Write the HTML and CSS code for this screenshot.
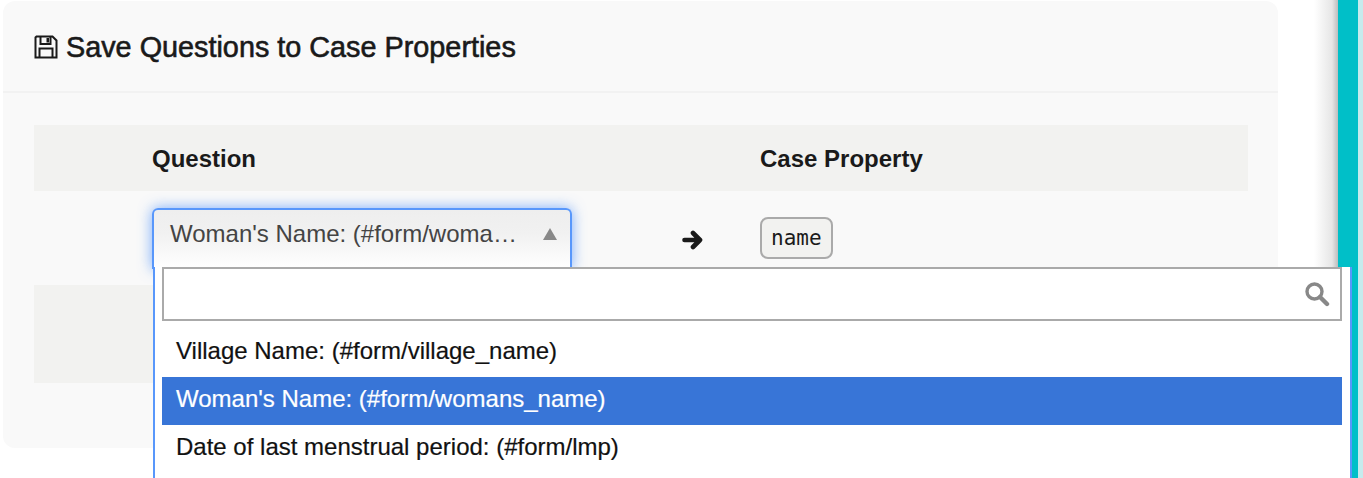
FILE: index.html
```html
<!DOCTYPE html>
<html lang="en">
<head>
  <meta charset="UTF-8">
  <title>Save Questions to Case Properties</title>
  <link rel="stylesheet" href="styles.css">
</head>
<body>

  <div class="page">
    <main class="content">
      <section class="panel">
        <header class="panel-head">
          <h2 class="panel-title">
            <svg class="save-icon" viewBox="0 0 24 24" width="24" height="24">
              <path d="M2.5 1.5H18.5L22.5 5.5V22.5H1.5V2.5Z M6.5 2V9H16.5V2 M5.5 22V13.5H18.5V22" fill="none" stroke="#1a1a1a" stroke-width="2"/>
              <rect x="12.5" y="3" width="2.5" height="4.5" fill="#1a1a1a"/>
            </svg>
            Save Questions to Case Properties
          </h2>
        </header>
        <div class="panel-body">
          <div class="row row-head">
            <div class="col-question">Question</div>
            <div class="col-arrow"></div>
            <div class="col-property">Case Property</div>
          </div>
          <div class="row row-item">
            <div class="col-question">
              <div class="select-box">
                <span class="select-text">Woman's Name: (#form/woma…</span>
                <span class="select-caret"></span>
              </div>
            </div>
            <div class="col-arrow">
              <svg viewBox="0 0 22 20" width="22" height="20">
                <path d="M2.5 10H18 M11 3L18 10L11 17" fill="none" stroke="#1a1a1a" stroke-width="4.6" stroke-linecap="round" stroke-linejoin="round"/>
              </svg>
            </div>
            <div class="col-property"><code class="prop-tag">name</code></div>
          </div>
          <div class="row row-empty"></div>
        </div>
      </section>
    </main>
    <aside class="sidebar"></aside>
  </div>

  <div class="dropdown">
    <div class="search-box">
      <svg viewBox="0 0 26 26" width="26" height="26">
        <circle cx="10.5" cy="10.5" r="7.5" fill="none" stroke="#888" stroke-width="3.4"/>
        <path d="M16 16L23 23" fill="none" stroke="#888" stroke-width="4.4" stroke-linecap="round"/>
      </svg>
    </div>
    <ul class="option-list">
      <li class="option">Village Name: (#form/village_name)</li>
      <li class="option option-active">Woman's Name: (#form/womans_name)</li>
      <li class="option">Date of last menstrual period: (#form/lmp)</li>
    </ul>
  </div>

</body>
</html>
```

FILE: styles.css
```css
* { box-sizing: border-box; }

html, body {
  margin: 0;
  padding: 0;
  height: 100%;
  overflow: hidden;
}

body {
  font-family: 'Liberation Sans', Arial, sans-serif;
  color: #1a1a1a;
  background: #fff;
}

.page {
  display: flex;
  height: 478px;
}

.content {
  width: 1338px;
  padding: 1px 0 0 3px;
  background: linear-gradient(to left, #bdbdbd 0, #e6e6e6 6px, #fff 24px);
}

.panel {
  width: 1275px;
  height: 447px;
  background: #f9f9f9;
  border-radius: 12px;
}

.panel-head {
  height: 92px;
  padding: 2px 31px 0;
  display: flex;
  align-items: center;
  border-bottom: 2px solid #f2f2f2;
}

.panel-title {
  margin: 0;
  display: flex;
  align-items: center;
  gap: 8px;
  font-size: 28.8px;
  font-weight: normal;
  -webkit-text-stroke: 0.6px #1a1a1a;
}

.save-icon {
  flex: none;
}

.panel-body {
  padding: 32px 30px 0 31px;
}

.row {
  display: flex;
}

.row-head {
  height: 66px;
  padding-top: 2px;
  align-items: center;
  background: #f2f2f0;
  font-size: 24px;
  font-weight: bold;
}

.row-item {
  height: 94px;
  padding-top: 17px;
  align-items: flex-start;
}

.row-empty {
  height: 98px;
  background: #f2f2f0;
}

.col-question {
  width: 530px;
  margin-left: 118px;
  flex: none;
}

.col-arrow {
  width: 78px;
  flex: none;
  padding-top: 22px;
}

.col-property {
  flex: 1;
}

.select-box {
  width: 420px;
  height: 61px;
  padding: 0 13px 11px 16px;
  display: flex;
  align-items: center;
  color: #444;
  font-size: 24px;
  background: linear-gradient(to bottom, #eee 0, #f1f1f1 40%, #fff 100%);
  border: 2px solid #5897fb;
  border-bottom: none;
  border-radius: 6px 6px 0 0;
  box-shadow: 0 0 14px rgba(88, 151, 251, 0.8);
}

.select-text {
  flex: 1;
  white-space: nowrap;
}

.select-caret {
  flex: none;
  width: 0;
  height: 0;
  border-left: 7px solid transparent;
  border-right: 7px solid transparent;
  border-bottom: 12px solid #888;
}

.prop-tag {
  display: inline-block;
  margin-top: 9px;
  padding: 0 9px;
  height: 42px;
  line-height: 38px;
  font-family: 'DejaVu Sans Mono', monospace;
  font-size: 21px;
  background: #f2f2f0;
  border: 2px solid #aaa;
  border-radius: 8px;
}

/* sits over the panel and the sidebar, like the open select2 menu */
.dropdown {
  position: absolute;
  left: 153px;
  top: 267px;
  width: 1199px;
  height: 211px;
  padding: 0 9px;
  background: #fff;
  border-left: 2px solid #5897fb;
  border-right: 2px solid #5897fb;
}

.search-box {
  width: 1180px;
  height: 54px;
  margin-left: -2px;
  padding-right: 10px;
  display: flex;
  align-items: center;
  justify-content: flex-end;
  background: #fff;
  border: 2px solid #aaa;
}

.option-list {
  margin: 8px 0 0 -2px;
  padding: 0;
  width: 1180px;
  list-style: none;
}

.option {
  height: 48px;
  padding: 0 14px;
  line-height: 44px;
  font-size: 24px;
  color: #111;
  -webkit-text-stroke: 0.2px currentColor;
}

.option-active {
  background: #3875d7;
  color: #fff;
}

.sidebar {
  width: 25px;
  flex: none;
  background: linear-gradient(to right, #00bfc8 0, #00bfc8 20px, #c5ebed 20px);
}
```
